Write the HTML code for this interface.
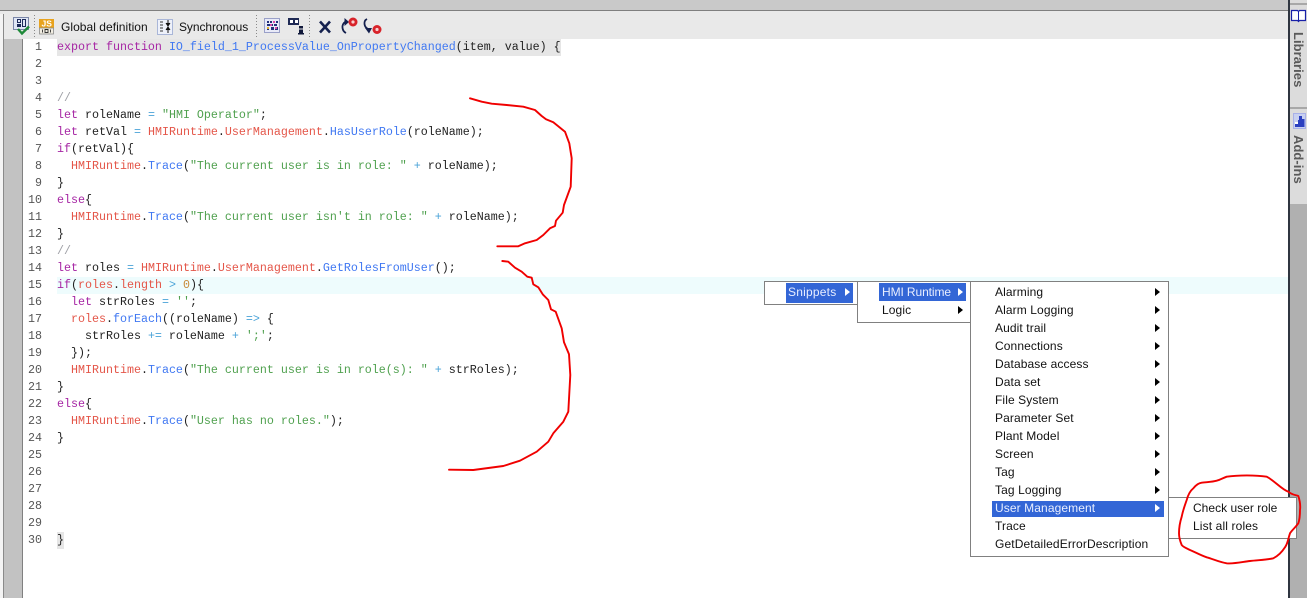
<!DOCTYPE html>
<html><head><meta charset="utf-8">
<style>
html,body{margin:0;padding:0;width:1307px;height:598px;overflow:hidden;background:#fff}
body{position:relative;font-family:"Liberation Sans",sans-serif}
.a{position:absolute}
.ln{position:absolute;left:23px;width:19px;text-align:right;font:11.67px/17px "Liberation Mono",monospace;color:#555;white-space:pre}
.c{position:absolute;left:57px;font:11.67px/17px "Liberation Mono",monospace;color:#222;white-space:pre}
.k{color:#a626a4}.f{color:#4078f2}.r{color:#e45649}.s{color:#50a14f}.o{color:#4aa3d8}.n{color:#c98a3a}.g{color:#a0a1a7}.d{color:#444}
.t{position:absolute;font-size:12px;line-height:18px;color:#111;white-space:pre;letter-spacing:.1px}
.m{position:absolute;background:#fff;border:1px solid #808080;box-sizing:border-box}
.h{position:absolute;background:#3366d6}
.w{color:#e8eeff}
.ar{position:absolute;width:0;height:0;border-left:5px solid #000;border-top:4px solid transparent;border-bottom:4px solid transparent}
.ar.wa{border-left-color:#fff}
.v{position:absolute;font-size:13px;font-weight:bold;color:#5a5a5a;letter-spacing:.05px;white-space:pre;transform-origin:0 0;transform:rotate(90deg);line-height:14px}
</style></head><body>
<div class="a" style="left:0;top:0;width:1288px;height:10px;background:#c9c9c9"></div>
<div class="a" style="left:0;top:10px;width:1288px;height:1px;background:#7f7f7f"></div>
<div class="a" style="left:0;top:11px;width:1288px;height:28px;background:#e9e9e9"></div>
<div class="a" style="left:0;top:14px;width:3px;height:584px;background:#f4f4f4"></div>
<div class="a" style="left:3px;top:14px;width:1px;height:584px;background:#8a8a8a"></div>
<div class="a" style="left:4px;top:39px;width:18px;height:559px;background:#c2c2c2"></div>
<div class="a" style="left:22px;top:39px;width:1px;height:559px;background:#808080"></div>
<div class="a" style="left:57px;top:39px;width:504px;height:17px;background:#e6e6e6"></div>
<div class="a" style="left:57px;top:277px;width:1231px;height:17px;background:#eefcfd"></div>
<div class="a" style="left:57px;top:532px;width:7px;height:17px;background:#e6e6e6"></div>

<svg class="a" style="left:0;top:11px" width="400" height="28" viewBox="0 11 400 28">
<rect x="13.500" y="17.500" width="15" height="12" fill="#dfe6f5" stroke="#7a86a8"/>
<rect x="17.500" y="19.500" width="3" height="3" fill="none" stroke="#1c2a5a"/><rect x="17" y="24" width="4" height="3" fill="#1c2a5a"/><rect x="22.500" y="19.500" width="3" height="7" fill="none" stroke="#1c2a5a"/>
<path d="M18 29l4 4.500 7-7" fill="none" stroke="#1f8a3a" stroke-width="2.400"/>
<path d="M34.500 15V38M256.500 15V38M309.500 15V38" stroke="#8a8a8a" stroke-dasharray="1 2"/>
<rect x="39" y="19" width="15" height="9" fill="#e8a31e"/><rect x="39.500" y="28" width="14" height="6" fill="#f1ede2" stroke="#8a8a8a" stroke-width=".8"/>
<text x="41.500" y="26.500" font-family="Liberation Sans" font-size="8.500" font-weight="bold" fill="#fff">JS</text>
<path d="M42.500 29.500v3M45 29.500h3v3h-3zM50.500 29.500v3" stroke="#333" fill="none" stroke-width=".9"/>
<rect x="157.500" y="19.500" width="15" height="15" fill="#eef1fa" stroke="#a9b6d8"/>
<path d="M160 22h3M160 25h3M160 28h3M160 31h3" stroke="#333"/>
<path d="M168 20v5M166 23l2 3 2-3M168 33v-5M166 30l2-3 2 3" stroke="#111" fill="#111"/>
<rect x="264.500" y="18.500" width="15" height="14" fill="#e8eaf8" stroke="#9aa0c8"/>
<path d="M267 21h2v2h-2zM270 21h2v2h-2zM273 21h2v2h-2zM276 21h2v2h-2zM267 24h3v2h-3zM271 24h2v2h-2zM274 24h3v2h-3zM267 27h2v3h-2zM271 27h3v3h-3zM275 27h3v3h-3z" fill="#22307a"/>
<path d="M270 24h2v2h-2zM275 27h2v2h-2zM273 21h2v2h-2z" fill="#d94aa8"/><path d="M267 27h2v2h-2z" fill="#e0b030"/>
<path d="M288 18h11v7h-11z" fill="#1f2a55"/><path d="M290 20h3v3h-3zM295 20h3v3h-3z" fill="#fff"/>
<path d="M299 26h4v2.500h-4zM299 29.500h4v3.500h1v1.500h-6v-1.500h1z" fill="#10183a"/>
<path d="M320 21.500l10 11M330 21.500l-10 11" stroke="#14204e" stroke-width="2.600"/>
<path d="M346 33c-4-2-5-8-1-11" fill="none" stroke="#14204e" stroke-width="1.800"/><path d="M344.500 18v8l4.500-4z" fill="#14204e"/>
<circle cx="353" cy="22" r="4.500" fill="#d8232a"/><circle cx="353" cy="22" r="1.600" fill="#f8d0d0"/>
<path d="M367 19c-4 2-3 8 1 10" fill="none" stroke="#14204e" stroke-width="1.800"/><path d="M365 28h7l-3 5.500z" fill="#14204e"/>
<circle cx="377" cy="29.500" r="4.500" fill="#d8232a"/><circle cx="377" cy="29.500" r="1.600" fill="#f8d0d0"/>
</svg>
<div class="t" style="left:61px;top:18px;letter-spacing:.04px">Global definition</div>
<div class="t" style="left:179px;top:18px;letter-spacing:-.08px">Synchronous</div>

<div class="ln" style="top:39px">1</div><div class="ln" style="top:56px">2</div><div class="ln" style="top:73px">3</div><div class="ln" style="top:90px">4</div><div class="ln" style="top:107px">5</div><div class="ln" style="top:124px">6</div><div class="ln" style="top:141px">7</div><div class="ln" style="top:158px">8</div><div class="ln" style="top:175px">9</div><div class="ln" style="top:192px">10</div><div class="ln" style="top:209px">11</div><div class="ln" style="top:226px">12</div><div class="ln" style="top:243px">13</div><div class="ln" style="top:260px">14</div><div class="ln" style="top:277px">15</div><div class="ln" style="top:294px">16</div><div class="ln" style="top:311px">17</div><div class="ln" style="top:328px">18</div><div class="ln" style="top:345px">19</div><div class="ln" style="top:362px">20</div><div class="ln" style="top:379px">21</div><div class="ln" style="top:396px">22</div><div class="ln" style="top:413px">23</div><div class="ln" style="top:430px">24</div><div class="ln" style="top:447px">25</div><div class="ln" style="top:464px">26</div><div class="ln" style="top:481px">27</div><div class="ln" style="top:498px">28</div><div class="ln" style="top:515px">29</div><div class="ln" style="top:532px">30</div>

<div class="c" style="top:39px"><span class="k">export function</span> <span class="f">IO_field_1_ProcessValue_OnPropertyChanged</span>(item, value) {</div>
<div class="c" style="top:90px"><span class="g">//</span></div>
<div class="c" style="top:107px"><span class="k">let</span> roleName <span class="o">=</span> <span class="s">"HMI Operator"</span>;</div>
<div class="c" style="top:124px"><span class="k">let</span> retVal <span class="o">=</span> <span class="r">HMIRuntime</span>.<span class="r">UserManagement</span>.<span class="f">HasUserRole</span>(roleName);</div>
<div class="c" style="top:141px"><span class="k">if</span>(retVal){</div>
<div class="c" style="top:158px">  <span class="r">HMIRuntime</span>.<span class="f">Trace</span>(<span class="s">"The current user is in role: "</span> <span class="o">+</span> roleName);</div>
<div class="c" style="top:175px">}</div>
<div class="c" style="top:192px"><span class="k">else</span>{</div>
<div class="c" style="top:209px">  <span class="r">HMIRuntime</span>.<span class="f">Trace</span>(<span class="s">"The current user isn't in role: "</span> <span class="o">+</span> roleName);</div>
<div class="c" style="top:226px">}</div>
<div class="c" style="top:243px"><span class="g">//</span></div>
<div class="c" style="top:260px"><span class="k">let</span> roles <span class="o">=</span> <span class="r">HMIRuntime</span>.<span class="r">UserManagement</span>.<span class="f">GetRolesFromUser</span>();</div>
<div class="c" style="top:277px"><span class="k">if</span>(<span class="r">roles</span>.<span class="r">length</span> <span class="o">&gt;</span> <span class="n">0</span>){</div>
<div class="c" style="top:294px">  <span class="k">let</span> strRoles <span class="o">=</span> <span class="s">''</span>;</div>
<div class="c" style="top:311px">  <span class="r">roles</span>.<span class="f">forEach</span>((roleName) <span class="o">=&gt;</span> {</div>
<div class="c" style="top:328px">    strRoles <span class="o">+=</span> roleName <span class="o">+</span> <span class="s">';'</span>;</div>
<div class="c" style="top:345px">  });</div>
<div class="c" style="top:362px">  <span class="r">HMIRuntime</span>.<span class="f">Trace</span>(<span class="s">"The current user is in role(s): "</span> <span class="o">+</span> strRoles);</div>
<div class="c" style="top:379px">}</div>
<div class="c" style="top:396px"><span class="k">else</span>{</div>
<div class="c" style="top:413px">  <span class="r">HMIRuntime</span>.<span class="f">Trace</span>(<span class="s">"User has no roles."</span>);</div>
<div class="c" style="top:430px">}</div>
<div class="c" style="top:532px">}</div>

<!-- right panel -->
<div class="a" style="left:1288px;top:0;width:2px;height:598px;background:#2f3540"></div>
<div class="a" style="left:1290px;top:0;width:17px;height:598px;background:#dcdcdc"></div>
<div class="a" style="left:1290px;top:204px;width:17px;height:394px;background:#b0b0b0"></div>
<div class="a" style="left:1290px;top:3px;width:17px;height:2px;background:#a8a8a8"></div>
<div class="a" style="left:1290px;top:107px;width:17px;height:2px;background:#a8a8a8"></div>
<svg class="a" style="left:1290px;top:8px" width="17" height="16" viewBox="0 0 17 16"><path d="M1.500 2.500h6l1 1 1-1h6v10h-6l-1 1-1-1h-6z" fill="#fff" stroke="#1820a8" stroke-width="1.200"/><path d="M8.500 3.500v10" stroke="#1820a8"/></svg>
<svg class="a" style="left:1293px;top:113px" width="13" height="16" viewBox="0 0 13 16"><rect x=".5" y=".5" width="12" height="15" fill="#c8d0f0" stroke="#a8b0e8"/><path d="M6 3h3v3h2.500v8H2v-4h3V7h1z" fill="#2c40c0"/><path d="M2 9h3v2H2z" fill="#fff"/></svg>
<div class="v" style="left:1305px;top:32px">Libraries</div>
<div class="v" style="left:1305px;top:135px">Add-ins</div>

<!-- menus -->
<div class="m" style="left:764px;top:281px;width:94px;height:24px"></div>
<div class="h" style="left:786px;top:283px;width:67px;height:20px"></div>
<div class="t w" style="left:788px;top:283px;letter-spacing:.22px">Snippets</div>
<div class="ar wa" style="left:845px;top:288px"></div>

<div class="m" style="left:857px;top:281px;width:114px;height:42px"></div>
<div class="h" style="left:879px;top:283px;width:87px;height:18px"></div>
<div class="t w" style="left:882px;top:283px;letter-spacing:-.1px">HMI Runtime</div>
<div class="ar wa" style="left:958px;top:288px"></div>
<div class="t" style="left:882px;top:301px">Logic</div>
<div class="ar" style="left:958px;top:306px"></div>

<div class="m" style="left:970px;top:281px;width:199px;height:276px"></div>
<div class="h" style="left:992px;top:501px;width:172px;height:16px"></div>
<div class="t" style="left:995px;top:283px">Alarming</div><div class="ar" style="left:1155px;top:288px"></div>
<div class="t" style="left:995px;top:301px">Alarm Logging</div><div class="ar" style="left:1155px;top:306px"></div>
<div class="t" style="left:995px;top:319px">Audit trail</div><div class="ar" style="left:1155px;top:324px"></div>
<div class="t" style="left:995px;top:337px">Connections</div><div class="ar" style="left:1155px;top:342px"></div>
<div class="t" style="left:995px;top:355px">Database access</div><div class="ar" style="left:1155px;top:360px"></div>
<div class="t" style="left:995px;top:373px">Data set</div><div class="ar" style="left:1155px;top:378px"></div>
<div class="t" style="left:995px;top:391px">File System</div><div class="ar" style="left:1155px;top:396px"></div>
<div class="t" style="left:995px;top:409px">Parameter Set</div><div class="ar" style="left:1155px;top:414px"></div>
<div class="t" style="left:995px;top:427px">Plant Model</div><div class="ar" style="left:1155px;top:432px"></div>
<div class="t" style="left:995px;top:445px">Screen</div><div class="ar" style="left:1155px;top:450px"></div>
<div class="t" style="left:995px;top:463px">Tag</div><div class="ar" style="left:1155px;top:468px"></div>
<div class="t" style="left:995px;top:481px">Tag Logging</div><div class="ar" style="left:1155px;top:486px"></div>
<div class="t w" style="left:995px;top:499px">User Management</div><div class="ar wa" style="left:1155px;top:504px"></div>
<div class="t" style="left:995px;top:517px">Trace</div>
<div class="t" style="left:995px;top:535px;letter-spacing:.12px">GetDetailedErrorDescription</div>

<div class="m" style="left:1168px;top:497px;width:129px;height:42px"></div>
<div class="t" style="left:1193px;top:499px;letter-spacing:.02px">Check user role</div>
<div class="t" style="left:1193px;top:517px;letter-spacing:.13px">List all roles</div>

<svg class="a" style="left:0;top:0" width="1307" height="598" viewBox="0 0 1307 598" fill="none" stroke="#f00000" stroke-width="1.900" stroke-linejoin="round" stroke-linecap="round">
<path d="M470 98.300L481.700 101.700 491.700 103.700 506.700 105 523.300 106.700 535 110 541.700 116 546 119.300 553.300 122.300 565 131.700 569.300 143.300 571.700 158.300 570.700 186.700 567.300 196 564 205 562.700 212.700 556 220.700 555 226 550 228.300 543.300 235 536.700 240 525 243.300 518.300 246.300 497.300 246.300"/>
<path d="M502.300 261L508.300 261.700 515 267.700 521.700 271.700 527.300 276.700 531.700 277.700 533.300 284.300 538.300 287.300 542.700 294.300 548.300 300 551 309.300 555.700 311.700 561.700 328.300 564 342.300 569 354.300 570.300 375 568.300 411.700 563.300 421.700 553.300 433.300 548.300 441.700 536.700 451.700 520 460.700 503.300 466 473.300 470 449 469.700"/>
<path d="M1226.700 476.700C1238 475 1256 475 1266.700 476.700C1275 481 1281 489 1288.300 491.700C1292 495 1296 495 1298.300 496C1300 501 1300.500 506 1300 510C1300 515 1299.500 520 1298.300 523.300C1295 528 1292 530 1290 533.300C1288 539 1288 543 1285 547.300C1282 552 1278 556 1273.300 558.300C1266 560 1258 560 1250 561C1242 562 1234 564 1226.700 563.300C1219 562 1213 559 1206.700 557.300C1200 555 1195 552 1190 550C1186 548 1183 547 1181.700 545C1180 541 1179 537 1179 533.300C1179 527 1180 522 1181.700 516.700C1183 510 1185 505 1186.700 500C1188 495 1190 491 1193.300 488.300C1196 485 1199 483 1201.700 482.700C1207 482 1212 482 1216.700 480.700C1220 480 1223 478 1226.700 476.700"/>
</svg>
</body></html>
